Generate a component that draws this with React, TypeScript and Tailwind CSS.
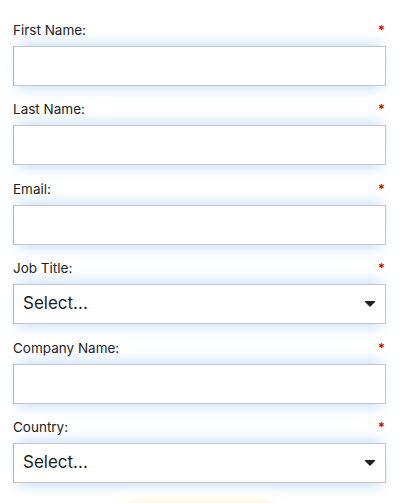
import React from "react";

const fields: { label: string; type: "text" | "select" }[] = [
  { label: "First Name:", type: "text" },
  { label: "Last Name:", type: "text" },
  { label: "Email:", type: "text" },
  { label: "Job Title:", type: "select" },
  { label: "Company Name:", type: "text" },
  { label: "Country:", type: "select" },
];

function Field({ label, type }: { label: string; type: "text" | "select" }) {
  return (
    <div className="flex flex-col">
      <div className="flex h-[22px] items-start justify-between text-[13.5px] leading-[22px] text-[#222]">
        <span>{label}</span>
        <span className="mr-[1px] text-[13px] font-bold text-[#cc1111]">*</span>
      </div>
      <div className="relative mt-[5px] flex h-[40px] items-center border border-[#c6c6c6] border-l-[#b4b4b4] bg-white shadow-[0_-9px_12px_-5px_rgba(150,195,240,0.45),0_9px_12px_-5px_rgba(150,195,240,0.45)]">
        {type === "select" && (
          <>
            <span className="pl-[9px] text-[17px] text-[#1c1c1c]">Select...</span>
            <svg
              className="absolute right-[10px] top-1/2 -translate-y-1/2"
              width="10"
              height="6"
              viewBox="0 0 10 6"
            >
              <polygon points="0,0 10,0 10,1 5,6 0,1" fill="#222" />
            </svg>
          </>
        )}
      </div>
    </div>
  );
}

export default function App() {
  return (
    <div
      className="h-[503px] w-[400px] overflow-hidden bg-white px-[13px] pt-[19px]"
      style={{ fontFamily: "Inter, 'Liberation Sans', sans-serif" }}
    >
      <div className="flex w-[373px] flex-col gap-[12.4px]">
        {fields.map((f) => (
          <Field key={f.label} label={f.label} type={f.type} />
        ))}
      </div>
      <div className="mx-auto mt-[22px] h-[30px] w-[150px] rounded-sm bg-white shadow-[0_-3px_8px_rgba(255,215,90,0.35)]" />
    </div>
  );
}
